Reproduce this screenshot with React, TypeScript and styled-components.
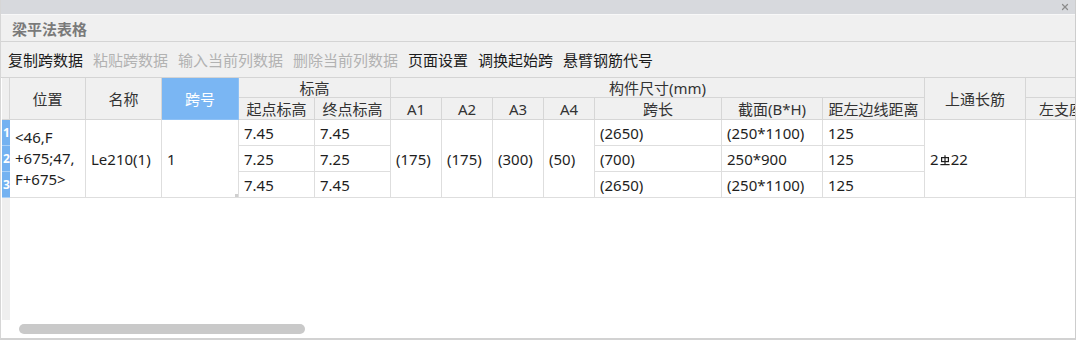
import React from 'react'
import styled, { createGlobalStyle } from 'styled-components'
import { X } from 'lucide-react'

const GlobalStyle = createGlobalStyle`
    html, body {
        margin: 0;
        padding: 0;
        background: #fff;
    }
    body {
        font-family: "Noto Sans", "Noto Sans CJK SC", sans-serif;
    }
`;

const Window = styled.div`
    width: 1076px;
    height: 340px;
    box-sizing: border-box;
    display: flex;
    flex-direction: column;
    background: #f0f0f0;
    border-left: 1px solid #d6d6d6;
    border-right: 1px solid #cdcdcd;
    border-bottom: 2px solid #d2d2d2;
    overflow: hidden;
`;

const TopStrip = styled.div`
    height: 14px;
    flex: none;
    display: flex;
    align-items: center;
    justify-content: flex-end;
    padding-right: 5px;
    background: #d7d9dd;
    color: #8c8c8c;
`;

const TitleBar = styled.div`
    height: 28px;
    flex: none;
    box-sizing: border-box;
    display: flex;
    align-items: center;
    padding-left: 11px;
    border-top: 1px solid #f8f8f8;
    border-bottom: 1px solid #d4d4d4;
    font-size: 15px;
    font-weight: bold;
    color: #7a7a7a;
`;

const Toolbar = styled.div`
    height: 36px;
    flex: none;
    box-sizing: border-box;
    display: flex;
    align-items: center;
    gap: 10px;
    padding-left: 7px;
    border-bottom: 1px solid #d4d4d4;
`;

const ToolButton = styled.span<{ $disabled?: boolean }>`
    font-size: 15px;
    line-height: 20px;
    color: ${props => props.$disabled ? '#b2b2b2' : '#1c1c1c'};
    white-space: nowrap;
`;

const Sheet = styled.div`
    flex: 1;
    display: flex;
    flex-direction: column;
    background: #fff;
    min-height: 0;
`;

const SheetBody = styled.div`
    flex: 1;
    overflow: hidden;
    padding-left: 1px;
    background: linear-gradient(to right, #fff 0 1px, #efefef 1px 9px, #fff 9px);
`;

const ScrollTrack = styled.div`
    height: 18px;
    flex: none;
    box-sizing: border-box;
    padding: 4px 0 0 18px;
    background: #fff;
`;

const ScrollThumb = styled.div`
    width: 286px;
    height: 10px;
    border-radius: 5px;
    background: #c9c9c9;
`;

const Table = styled.table`
    border-collapse: separate;
    border-spacing: 0;
    table-layout: fixed;
    width: 1126px;
    font-size: 15px;
`;

const Row = styled.tr<{ $h: number }>`
    height: ${props => props.$h}px;
`;

const HeadCell = styled.th<{ $active?: boolean }>`
    box-sizing: border-box;
    padding: 0;
    font-weight: normal;
    text-align: center;
    vertical-align: middle;
    white-space: nowrap;
    overflow: hidden;
    line-height: 18px;
    color: ${props => props.$active ? '#fff' : '#333'};
    background: ${props => props.$active ? '#7ab6f3' : '#f0f0f0'};
    border-right: 1px solid ${props => props.$active ? '#8ec1f5' : '#d6d6d6'};
    border-bottom: 1px solid ${props => props.$active ? '#8ec1f5' : '#d6d6d6'};
`;

const GutterHead = styled.th`
    padding: 0;
    background: #efefef;
    border-right: 1px solid #d6d6d6;
    border-bottom: 1px solid #d6d6d6;
`;

const RowNumber = styled.td`
    padding: 0 0 0 1px;
    font-size: 12px;
    font-weight: bold;
    line-height: 14px;
    color: #fff;
    background: #74b2f1;
    border-bottom: 1px solid #a9d0f7;
    overflow: hidden;
    vertical-align: middle;
`;

const Cell = styled.td<{ $wrap?: boolean }>`
    box-sizing: border-box;
    position: relative;
    padding: 0 4px 0 5px;
    color: #1e1e1e;
    background: #fff;
    text-align: left;
    vertical-align: middle;
    white-space: ${props => props.$wrap ? 'normal' : 'nowrap'};
    line-height: ${props => props.$wrap ? '21px' : '18px'};
    overflow: hidden;
    border-right: 1px solid #dedede;
    border-bottom: 1px solid #dedede;
`;

const Handle = styled.span`
    position: absolute;
    right: -1px;
    bottom: -1px;
    width: 4px;
    height: 4px;
    background: #cfcfcf;
`;

const Mark = styled.svg`
    vertical-align: -1px;
    margin: 0 1px 0 1px;
`;

const RebarMark = () => (
    <Mark width="10" height="11" viewBox="0 0 10 11" fill="none" stroke="#1e1e1e" strokeWidth="1.2">
        <rect x="1.6" y="2.6" width="6.8" height="4" />
        <line x1="5" y1="0.3" x2="5" y2="9.6" />
        <line x1="0.4" y1="9.6" x2="9.6" y2="9.6" />
    </Mark>
);

const tools = [
    { label: '复制跨数据' },
    { label: '粘贴跨数据', disabled: true },
    { label: '输入当前列数据', disabled: true },
    { label: '删除当前列数据', disabled: true },
    { label: '页面设置' },
    { label: '调换起始跨' },
    { label: '悬臂钢筋代号' },
];

// gutter, 位置, 名称, 跨号, 起点, 终点, A1-A4, 跨长, 截面, 距左, 上通长筋, 左支座负筋
const colWidths = [8, 76, 76, 77, 76, 76, 51, 51, 51, 51, 127, 101, 102, 101, 102];

const spans = [
    { start: '7.45', end: '7.45', length: '(2650)', section: '(250*1100)', offset: '125' },
    { start: '7.25', end: '7.25', length: '(700)', section: '250*900', offset: '125' },
    { start: '7.45', end: '7.45', length: '(2650)', section: '(250*1100)', offset: '125' },
];

const App = () => {
    return (
        <>
            <GlobalStyle />
            <Window>
                <TopStrip>
                    <X size={10} strokeWidth={3} />
                </TopStrip>
                <TitleBar>梁平法表格</TitleBar>
                <Toolbar>
                    {tools.map(t => (
                        <ToolButton key={t.label} $disabled={t.disabled}>{t.label}</ToolButton>
                    ))}
                </Toolbar>
                <Sheet>
                    <SheetBody>
                        <Table>
                            <colgroup>
                                {colWidths.map((w, i) => <col key={i} style={{ width: w }} />)}
                            </colgroup>
                            <thead>
                                <Row $h={20}>
                                    <GutterHead rowSpan={2} />
                                    <HeadCell rowSpan={2}>位置</HeadCell>
                                    <HeadCell rowSpan={2}>名称</HeadCell>
                                    <HeadCell rowSpan={2} $active>跨号</HeadCell>
                                    <HeadCell colSpan={2}>标高</HeadCell>
                                    <HeadCell colSpan={7}>构件尺寸(mm)</HeadCell>
                                    <HeadCell rowSpan={2}>上通长筋</HeadCell>
                                    <HeadCell />
                                </Row>
                                <Row $h={22}>
                                    <HeadCell>起点标高</HeadCell>
                                    <HeadCell>终点标高</HeadCell>
                                    <HeadCell>A1</HeadCell>
                                    <HeadCell>A2</HeadCell>
                                    <HeadCell>A3</HeadCell>
                                    <HeadCell>A4</HeadCell>
                                    <HeadCell>跨长</HeadCell>
                                    <HeadCell>截面(B*H)</HeadCell>
                                    <HeadCell>距左边线距离</HeadCell>
                                    <HeadCell>左支座负筋</HeadCell>
                                </Row>
                            </thead>
                            <tbody>
                                {spans.map((s, i) => (
                                    <Row $h={26} key={i}>
                                        <RowNumber>{i + 1}</RowNumber>
                                        {i === 0 && (
                                            <>
                                                <Cell rowSpan={3} $wrap>&lt;46,F<br />+675;47,<br />F+675&gt;</Cell>
                                                <Cell rowSpan={3}>Le210(1)</Cell>
                                                <Cell rowSpan={3}>1<Handle /></Cell>
                                            </>
                                        )}
                                        <Cell>{s.start}</Cell>
                                        <Cell>{s.end}</Cell>
                                        {i === 0 && (
                                            <>
                                                <Cell rowSpan={3}>(175)</Cell>
                                                <Cell rowSpan={3}>(175)</Cell>
                                                <Cell rowSpan={3}>(300)</Cell>
                                                <Cell rowSpan={3}>(50)</Cell>
                                            </>
                                        )}
                                        <Cell>{s.length}</Cell>
                                        <Cell>{s.section}</Cell>
                                        <Cell>{s.offset}</Cell>
                                        {i === 0 && (
                                            <>
                                                <Cell rowSpan={3}>2<RebarMark />22</Cell>
                                                <Cell rowSpan={3} />
                                            </>
                                        )}
                                    </Row>
                                ))}
                            </tbody>
                        </Table>
                    </SheetBody>
                    <ScrollTrack>
                        <ScrollThumb />
                    </ScrollTrack>
                </Sheet>
            </Window>
        </>
    )
}

export default App
